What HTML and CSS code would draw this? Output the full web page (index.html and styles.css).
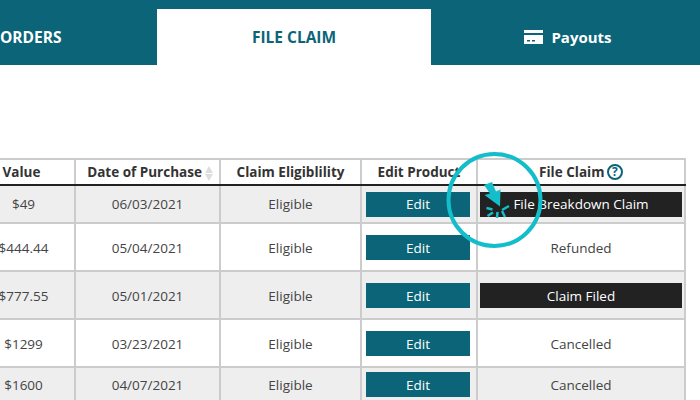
FILE: index.html
```html
<!DOCTYPE html>
<html lang="en">
<head>
<meta charset="utf-8">
<title>File Claim</title>
<link rel="stylesheet" href="styles.css">
</head>
<body>
<nav class="tabs">
  <a class="tab tab-orders">ORDERS</a>
  <a class="tab tab-active">FILE CLAIM</a>
  <a class="tab tab-payouts">
    <svg class="card-icon" width="19" height="14" viewBox="0 0 19 14"><path fill="#fff" d="M0 0h19v3H0zM0 5h19v9H0z"/><path fill="#0b6478" d="M3 10h3v1.500H3zM8 10h3v1.500H8z"/></svg>
    Payouts
  </a>
</nav>
<main class="table-wrap">
  <table class="claims">
    <thead>
      <tr>
        <th class="c-value">Value</th>
        <th class="c-date">Date of Purchase<span class="sort"><i class="up"></i><i class="down"></i></span></th>
        <th class="c-elig">Claim Eligiblility</th>
        <th class="c-edit">Edit Product</th>
        <th class="c-claim">File Claim <span class="help">?</span></th>
      </tr>
    </thead>
    <tbody>
      <tr class="r1 shade">
        <td>$49</td><td>06/03/2021</td><td>Eligible</td>
        <td><a class="btn edit">Edit</a></td>
        <td><a class="btn dark">File Breakdown Claim</a></td>
      </tr>
      <tr class="r2">
        <td>$444.44</td><td>05/04/2021</td><td>Eligible</td>
        <td><a class="btn edit">Edit</a></td>
        <td>Refunded</td>
      </tr>
      <tr class="r2 shade">
        <td>$777.55</td><td>05/01/2021</td><td>Eligible</td>
        <td><a class="btn edit">Edit</a></td>
        <td><a class="btn dark">Claim Filed</a></td>
      </tr>
      <tr class="r2">
        <td>$1299</td><td>03/23/2021</td><td>Eligible</td>
        <td><a class="btn edit">Edit</a></td>
        <td>Cancelled</td>
      </tr>
      <tr class="r3 shade">
        <td>$1600</td><td>04/07/2021</td><td>Eligible</td>
        <td><a class="btn edit">Edit</a></td>
        <td>Cancelled</td>
      </tr>
    </tbody>
  </table>
</main>
<svg class="callout" width="110" height="110" viewBox="0 0 110 110">
  <circle cx="54.500" cy="55" r="46" fill="none" stroke="#13bdca" stroke-width="4"/>
  <path fill="#13bdca" d="M44 40l8-3 4 9.500 4.500-2-.5 17L44.500 50l5.500-1.500z"/>
  <path stroke="#13bdca" stroke-width="2.500" fill="none" d="M46.500 63l6 1.500M47.500 71l5.500-3.500M57 73l.5-6M65 72l-3-6M69 61l-7 4"/>
</svg>
</body>
</html>
```
FILE: styles.css
```css
html, body {
  margin: 0;
  padding: 0;
  width: 700px;
  height: 400px;
  overflow: hidden;
  background: #fff;
  font-family: "Open Sans", "Noto Sans", sans-serif;
  color: #444;
}
body { position: relative; }

.tabs {
  display: flex;
  height: 65px;
  background: #0b6478;
  padding-top: 9px;
  box-sizing: border-box;
}
.tab {
  display: flex;
  align-items: center;
  justify-content: center;
  font-size: 15.500px;
  font-weight: 700;
  color: #fff;
  padding-bottom: 1px;
  box-sizing: border-box;
}
.tab-orders { width: 157px; justify-content: flex-start; }
.tab-active { width: 274px; background: #fff; color: #0b6478; }
.tab-payouts { flex: 1; gap: 8px; font-size: 15px; padding-left: 5px; padding-bottom: 0; }
.card-icon { flex: none; }

.table-wrap {
  margin-top: 93px;
  margin-left: -33px;
}
.claims {
  border-collapse: collapse;
  table-layout: fixed;
  width: 717px;
  font-size: 13.500px;
  text-align: center;
}
.claims th, .claims td {
  border: 2px solid #ccc;
  padding: 0;
}
.claims th {
  height: 24px;
  font-weight: 700;
  color: #333;
  border-bottom: 2px solid #222;
}
.claims th.c-date { padding-left: 5px; }
.claims td:first-child { padding-left: 4px; }
.c-value { width: 105px; }
.c-date { width: 138px; }
.c-elig { width: 139px; }
.c-edit { width: 114px; }
.c-claim { width: 206px; }

.sort {
  display: inline-flex;
  flex-direction: column;
  gap: 1px;
  margin-left: 3px;
  vertical-align: middle;
}
.sort i { display: block; width: 0; height: 0; border-left: 4px solid transparent; border-right: 4px solid transparent; }
.sort .up { border-bottom: 7px solid #ddd; }
.sort .down { border-top: 7px solid #ddd; }

.help {
  display: inline-block;
  width: 12px;
  height: 12px;
  line-height: 12px;
  border: 2px solid #0b6478;
  border-radius: 50%;
  font-size: 12px;
  font-weight: 700;
  color: #0b6478;
  vertical-align: 1px;
  margin-left: -1px;
}

.shade td { background: #eee; }
.r1 td { height: 36px; }
.r2 td { height: 45px; padding-top: 1px; }
.r3 td { height: 33px; }
.r2 .btn, .r3 .btn { line-height: 27px; }

.btn {
  display: block;
  height: 25px;
  line-height: 25px;
  color: #fff;
}
.edit { background: #0b6478; width: 104px; margin-left: 4px; }
.dark { background: #222; margin: 0 2px; }

.callout {
  position: absolute;
  left: 440px;
  top: 145px;
}
```
